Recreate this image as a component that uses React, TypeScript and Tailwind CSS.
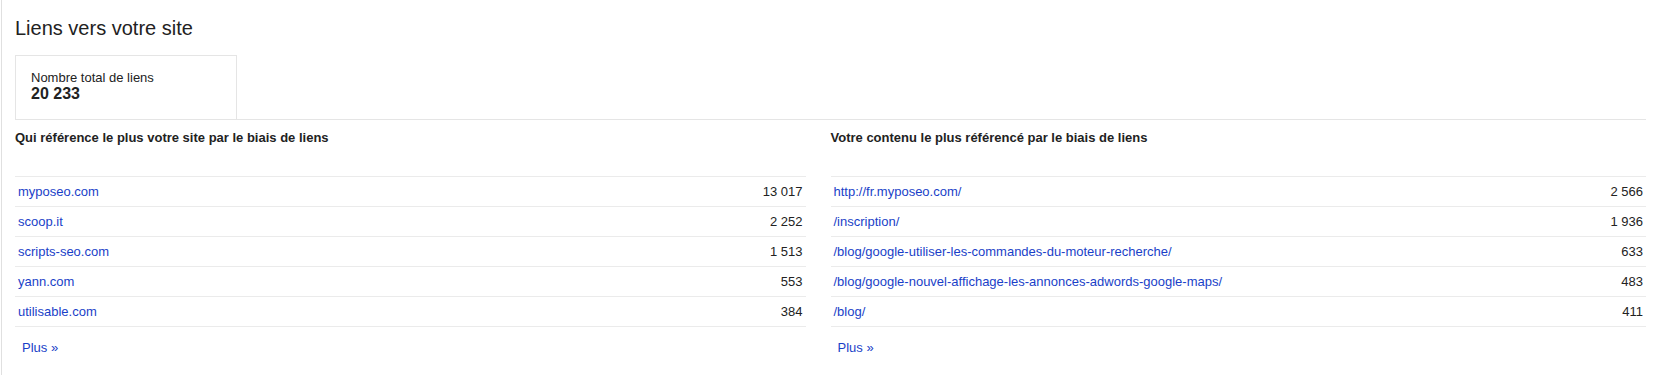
import React from 'react'

const sources = [
    { name: 'myposeo.com', count: '13 017' },
    { name: 'scoop.it', count: '2 252' },
    { name: 'scripts-seo.com', count: '1 513' },
    { name: 'yann.com', count: '553' },
    { name: 'utilisable.com', count: '384' },
]

const pages = [
    { name: 'http://fr.myposeo.com/', count: '2 566' },
    { name: '/inscription/', count: '1 936' },
    { name: '/blog/google-utiliser-les-commandes-du-moteur-recherche/', count: '633' },
    { name: '/blog/google-nouvel-affichage-les-annonces-adwords-google-maps/', count: '483' },
    { name: '/blog/', count: '411' },
]

function LinkTable({ title, rows }: { title: string; rows: { name: string; count: string }[] }) {
    return (
        <div>
            <h3 className="pt-[10px] text-[13px] leading-[16px] font-bold text-[#222]">{title}</h3>
            <div className="mt-[30px] border-t border-[#ebebeb]">
                {rows.map((r) => (
                    <div
                        key={r.name}
                        className="flex h-[30px] items-center justify-between border-b border-[#ebebeb] px-[3px] text-[13px] leading-[16px]"
                    >
                        <a href="#" className="text-[#1a3fc8]">
                            {r.name}
                        </a>
                        <span className="text-[#222]">{r.count}</span>
                    </div>
                ))}
            </div>
            <a href="#" className="mt-[13px] ml-[7px] block text-[13px] leading-[16px] text-[#1a3fc8]">
                Plus »
            </a>
        </div>
    )
}

export default function App() {
    return (
        <div className="ml-px min-h-[375px] border-l border-[#e0e0e0] bg-white pr-[23px] pl-[13px] font-['Liberation_Sans',Arial,sans-serif]">
            <h2 className="pt-[16px] text-[20px] leading-[24px] text-[#222]">Liens vers votre site</h2>

            {/* total */}
            <div className="mt-[15px] flex border-b border-[#e5e5e5]">
                <div className="h-[64px] w-[222px] border-x border-t border-[#e5e5e5] pt-[14px] pl-[15px]">
                    <div className="text-[13px] leading-[16px] text-[#222]">Nombre total de liens</div>
                    <div className="text-[16px] leading-[16px] font-bold text-[#222]">20 233</div>
                </div>
            </div>

            <div className="grid grid-cols-2">
                <div className="pr-[25px]">
                    <LinkTable title="Qui référence le plus votre site par le biais de liens" rows={sources} />
                </div>
                <LinkTable title="Votre contenu le plus référencé par le biais de liens" rows={pages} />
            </div>
        </div>
    )
}
